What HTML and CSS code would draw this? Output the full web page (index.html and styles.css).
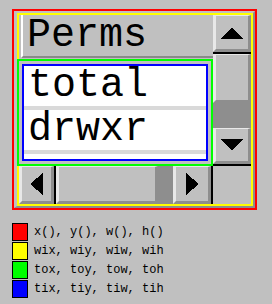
FILE: index.html
```html
<!DOCTYPE html>
<html lang="en">
<head>
<meta charset="UTF-8">
<title>Table dimensions</title>
<link rel="stylesheet" href="styles.css">
</head>
<body>

<!-- widget box: red = x(),y(),w(),h() -->
<div class="widget">
  <div class="frame">
    <!-- yellow = wix, wiy, wiw, wih -->
    <div class="inner">
        <div class="left">
            <div class="col-header">
                <div class="hcell">Perms</div>
            </div>
            <!-- green = tox... -->
            <div class="table-outer">
                <!-- blue = tix... -->
                <div class="table-inner">
                    <div class="row">total</div>
                    <div class="row">drwxr</div>
                    <div class="row"></div>
                </div>
            </div>
            <div class="hscroll">
                <div class="sbtn sbtn-h">
                    <svg width="13" height="22" viewBox="0 0 13 22"><polygon points="0,11 13,0 13,22" /></svg>
                </div>
                <div class="blk-v"></div>
                <div class="thumb thumb-h"></div>
                <div class="trough trough-h"></div>
                <div class="sbtn sbtn-h sbtn-right">
                    <svg width="13" height="22" viewBox="0 0 13 22"><polygon points="13,11 0,0 0,22" /></svg>
                </div>
                <div class="blk-v"></div>
            </div>
        </div>
        <div class="right">
            <div class="vscroll">
                <div class="sbtn sbtn-up">
                    <svg width="22" height="12" viewBox="0 0 22 12"><polygon points="11,0 0,12 22,12" /></svg>
                </div>
                <div class="blk-h"></div>
                <div class="thumb thumb-v"></div>
                <div class="trough trough-v"></div>
                <div class="sbtn sbtn-down">
                    <svg width="22" height="12" viewBox="0 0 22 12"><polygon points="0,0 22,0 11,12" /></svg>
                </div>
            </div>
            <div class="corner"></div>
        </div>
    </div>
  </div>
</div>

<div class="legend">
    <div class="item"><span class="swatch red"></span>x(), y(), w(), h()</div>
    <div class="item"><span class="swatch yellow"></span>wix, wiy, wiw, wih</div>
    <div class="item"><span class="swatch green"></span>tox, toy, tow, toh</div>
    <div class="item"><span class="swatch blue"></span>tix, tiy, tiw, tih</div>
</div>

</body>
</html>
```

FILE: styles.css
```css
body {
    margin: 0;
    padding: 0;
    background: #c0c0c0;
    font-family: "Liberation Mono", "Courier New", monospace;
    color: #000;
}
svg {
    display: block;
    shape-rendering: crispEdges;
}
svg polygon {
    fill: #000;
}
.widget {
    width: 245px;
    height: 201px;
    margin: 9px 0 0 12px;
    border: 2px solid #ff0000;
    box-sizing: border-box;
}
.frame {
    height: 197px;
    border-style: solid;
    border-width: 2px 2px 2px 3px;
    border-color: #c0c0c0 #8e8e8e #8e8e8e #c0c0c0;
    box-sizing: border-box;
}
.inner {
    height: 193px;
    border: 2px solid #ffff00;
    box-sizing: border-box;
    display: flex;
}
.left {
    width: 194px;
    display: flex;
    flex-direction: column;
}
.right {
    width: 38px;
    display: flex;
    flex-direction: column;
}

/* column header */
.col-header {
    height: 44px;
    padding: 0 0 1px 2px;
    box-sizing: border-box;
}
.hcell {
    height: 43px;
    padding: 1px 0 0 4px;
    box-sizing: border-box;
    border-left: 2px solid #ffffff;
    border-bottom: 2px solid #8a8a8a;
    font-size: 40px;
    line-height: 40px;
    white-space: nowrap;
}

/* table area */
.table-outer {
    height: 107px;
    width: 196px;
    margin-left: -2px;
    border: 2px solid #00ff00;
    padding: 3px;
    box-sizing: border-box;
    background: #c0c0c0;
}
.table-inner {
    height: 97px;
    border: 2px solid #0000ff;
    box-sizing: border-box;
    overflow: hidden;
    background: #ffffff;
}
.row {
    height: 44px;
    box-sizing: border-box;
    padding-left: 4px;
    border-bottom: 4px solid #d9d9d9;
    font-size: 40px;
    line-height: 40px;
    white-space: nowrap;
}

/* scrollbars */
.hscroll {
    height: 38px;
    display: flex;
}
.vscroll {
    height: 149px;
    display: flex;
    flex-direction: column;
}
.sbtn, .thumb {
    background: #c0c0c0;
    box-sizing: border-box;
    border-style: solid;
    border-width: 1px 3px 3px 3px;
    border-color: #e8e8e8 #8e8e8e #8e8e8e #e8e8e8;
    display: flex;
    align-items: center;
    justify-content: center;
}
.sbtn-h {
    width: 35px;
}
.sbtn-right {
    width: 38px;
}
.sbtn-up {
    height: 37px;
}
.sbtn-down {
    height: 36px;
}
.thumb-h {
    width: 102px;
}
.thumb-v {
    height: 49px;
}
.trough {
    background: #8e8e8e;
}
.trough-h {
    width: 15px;
}
.trough-v {
    height: 25px;
}
.blk-v {
    width: 2px;
    background: #000;
}
.blk-h {
    height: 2px;
    background: #000;
}
.corner {
    height: 40px;
    border-top: 2px solid #000;
    box-sizing: border-box;
}

/* legend */
.legend {
    margin: 12px 0 0 12px;
}
.item {
    height: 19px;
    display: flex;
    align-items: center;
    font-size: 12px;
}
.swatch {
    width: 16px;
    height: 18px;
    box-sizing: border-box;
    border: 1px solid #000;
    margin-right: 6px;
}
.red { background: #ff0000; }
.yellow { background: #ffff00; }
.green { background: #00ff00; }
.blue { background: #0000ff; }
```
